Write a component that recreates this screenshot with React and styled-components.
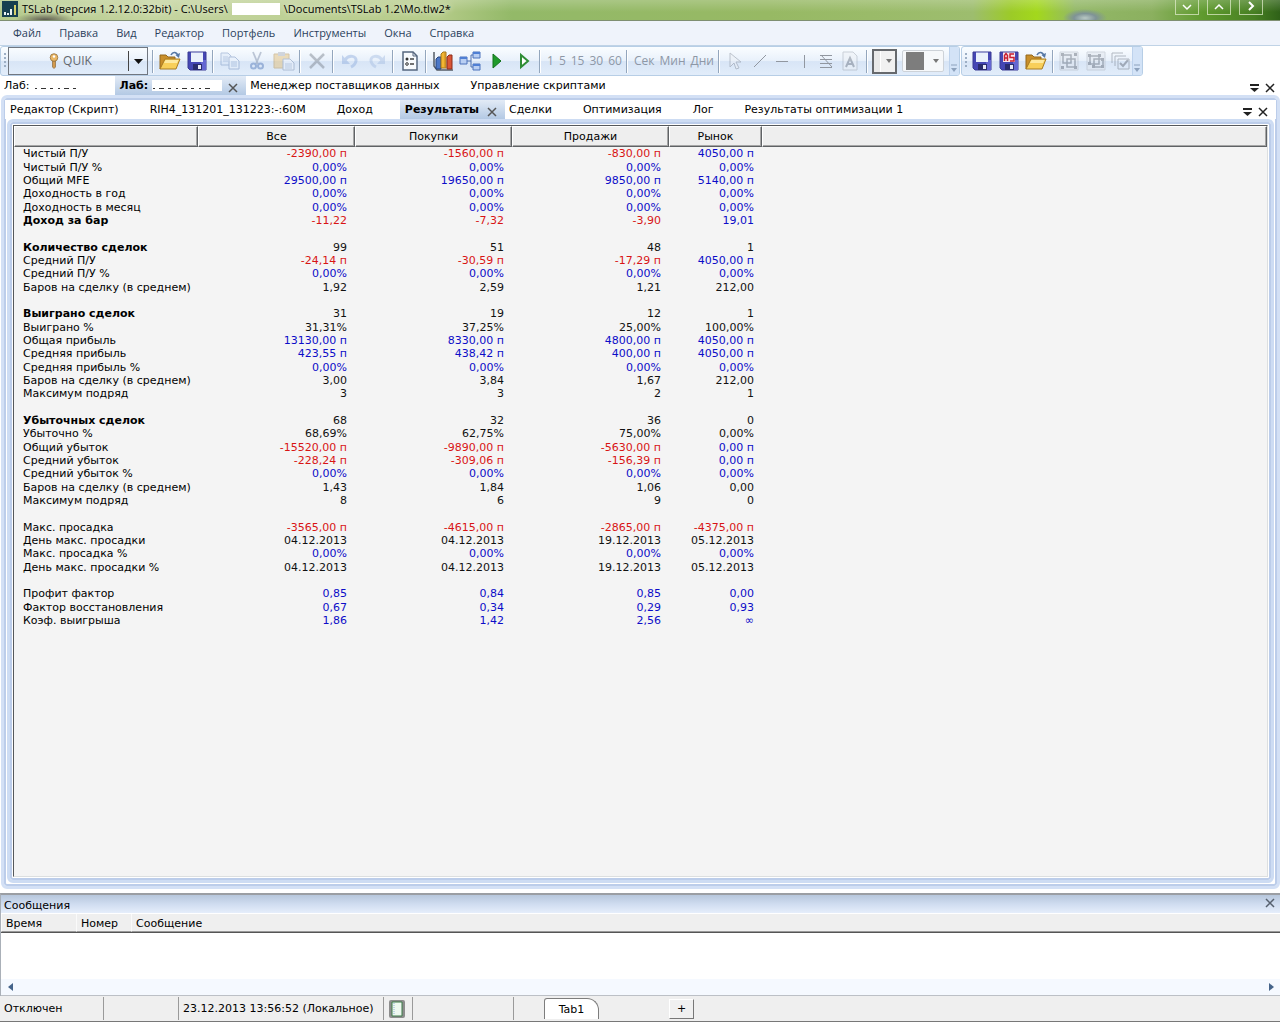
import React from 'react';
import styled, { createGlobalStyle, css } from 'styled-components';

const GlobalStyle = createGlobalStyle`
  * { box-sizing: border-box; }
  body {
    margin: 0;
    background: #fff;
    color: #000;
    font-family: "DejaVu Sans", "Liberation Sans", sans-serif;
    font-size: 11px;
    line-height: 13px;
  }
  button, select {
    font: inherit;
    color: inherit;
    margin: 0;
    padding: 0;
    border: 0;
    background: none;
  }
`;

const uiFont = css`
  font-family: "Open Sans", "Noto Sans", sans-serif;
  font-size: ${(p) => p.$size || 11}px;
  line-height: 16px;
`;

const Window = styled.div`
  display: flex;
  flex-direction: column;
  min-height: 100vh;
`;

/* ---------- title bar and menu ---------- */

const TitleBar = styled.header`
  ${uiFont}
  display: flex;
  justify-content: space-between;
  height: 21px;
  padding-left: 2px;
  border-bottom: 1px solid #7f8f72;
  background:
    radial-gradient(ellipse 22px 9px at 1085px 18px, #b8c8c4 0, #7f9396 50%, transparent 100%),
    radial-gradient(ellipse 30px 8px at 45px 20px, #5d5a50 0, transparent 100%),
    linear-gradient(to bottom, rgba(255, 255, 255, 0.2), transparent 60%),
    linear-gradient(to right, #b3c98a 0, #c5d5a0 12%, #b6cc8a 34%, #93b968 40%, #97b964 60%, #9dbd6e 76%,
      #9ccb27 79%, #a3d81c 81%, #93b867 84%, #8bb05f 90%, #5f9a2e 94%, #477f22 98%, #2f6118 100%);
`;

const TitleText = styled.h1`
  display: flex;
  align-items: center;
  margin: 0;
  padding-bottom: 2px;
  font-size: inherit;
  font-weight: 400;
  gap: 4px;
  text-shadow: 0 0 6px #fff;
`;

const HiddenName = styled.span`
  width: ${(p) => p.$width}px;
  height: 12px;
  background: #fff;
`;

const Caption = styled.div`
  display: flex;
  gap: 8px;
  padding-right: 17px;
`;

const CaptionButton = styled.button`
  display: flex;
  justify-content: center;
  width: 24px;
  height: 15px;
  border: 1px solid rgba(230, 240, 210, 0.7);
  border-top: 0;
`;

const MenuBar = styled.nav`
  ${uiFont}
  display: flex;
  align-items: center;
  gap: 18px;
  height: 25px;
  padding-left: 13px;
  border-bottom: 1px solid #c0d3e6;
  background: #eff3fb;
  color: #2b3f5c;
`;

/* ---------- toolbars ---------- */

const ToolbarRow = styled.div`
  ${uiFont}
  display: flex;
  gap: 1px;
  height: 30px;
`;

const Toolbar = styled.div`
  display: flex;
  align-items: center;
  padding-left: 3px;
  border: 1px solid #b7cee6;
  border-radius: 3px;
  overflow: hidden;
  color: #8d97a6;
  background: linear-gradient(to bottom, #fafdff 0, #e9f1fb 48%, #d8e5f6 52%, #e2edfa 100%);
`;

const Grip = styled.span`
  width: 4px;
  height: 16px;
  background: repeating-linear-gradient(to bottom, #9caec4 0 2px, transparent 2px 4px);
  background-size: 2px 100%;
  background-repeat: no-repeat;
`;

const Provider = styled.div`
  display: flex;
  align-items: center;
  width: 140px;
  height: 28px;
  margin-right: 2px;
  border: 1px solid #717780;
  color: #62666c;
`;

const ProviderName = styled.button`
  flex: 1;
  display: flex;
  align-items: center;
  justify-content: center;
  gap: 4px;
  height: 20px;
  padding-left: 4px;
  font-size: 12px;
  border-right: 1px solid #444;
`;

const ProviderArrow = styled.button`
  width: 18px;
  height: 20px;
  display: grid;
  place-items: center;
`;

const IconButton = styled.button`
  display: grid;
  place-items: center;
  flex: none;
  width: ${(p) => (p.$narrow ? 22 : 27)}px;
  height: 26px;
  opacity: ${(p) => (p.$dim ? 0.45 : 1)};
`;

const Divider = styled.span`
  flex: none;
  width: 2px;
  height: 23px;
  margin: 0 2px;
  border-left: 1px solid #93a6bd;
  border-right: 1px solid #fff;
`;

const TextButtons = styled.div`
  display: flex;
  gap: 5px;
  padding: 0 2px 0 4px;
  font-size: 12px;
`;

const StyleSelect = styled.select`
  width: 25px;
  height: 25px;
  margin-left: 2px;
  appearance: none;
  border: 2px solid #66696d;
  color: transparent;
  background:
    conic-gradient(from -45deg at 50% 100%, #888 0 90deg, transparent 90deg) 0 0 / 0 0 no-repeat,
    linear-gradient(to right, #e9e9e9 6px, #fff 6px 7px, #f1f1f1 7px);
`;

const SelectBox = styled.label`
  display: grid;
  align-items: center;
  justify-items: end;
  & > * { grid-area: 1 / 1; }
  & > svg { margin-right: 5px; pointer-events: none; }
`;

const ColorButton = styled.button`
  display: flex;
  align-items: center;
  gap: 9px;
  width: 42px;
  height: 22px;
  margin: 0 5px;
  padding-left: 3px;
  border: 1px solid #cdd2d8;
  border-radius: 2px;
  background: #f6f8fa;
`;

const Swatch = styled.span`
  width: 18px;
  height: 18px;
  background: #7d7d7d;
`;

const Overflow = styled.button`
  display: grid;
  place-items: end center;
  width: 10px;
  height: 28px;
  padding-bottom: 3px;
  border-left: 1px solid #bdd2ec;
  background: #d3e3f7;
`;

/* ---------- tabs and frames ---------- */

const TabStrip = styled.div`
  display: flex;
  align-items: stretch;
  height: 19px;
  padding: 0 ${(p) => (p.$inner ? 3 : 0)}px 0 ${(p) => (p.$inner ? 1 : 0)}px;
  background: #fff;
`;

const Tab = styled.div`
  display: flex;
  align-items: center;
  padding-left: 4px;
  padding-right: ${(p) => (p.$active ? 8 : 27)}px;
  font-weight: ${(p) => (p.$active ? 700 : 400)};
  ${(p) => p.$active && css`
    padding-left: 5px;
    background: linear-gradient(to bottom, #e3ebf6, #b3c9e4);
  `}
`;

const TabLabel = styled.button`
  display: flex;
  align-items: center;
  gap: 4px;
  white-space: nowrap;
`;

const CloseButton = styled.button`
  display: grid;
  place-items: center;
  width: 10px;
  height: 15px;
  margin-left: ${(p) => p.$space || 0}px;
  align-self: end;
`;

const StripActions = styled.div`
  display: flex;
  align-items: center;
  gap: 6px;
  margin-left: auto;
  padding-right: 5px;
`;

const OuterFrame = styled.main`
  flex: 1;
  display: flex;
  flex-direction: column;
  margin: 0 0 4px 1px;
  padding: 2px 1px 1px;
  border: 3px solid #d3e0f5;
  border-radius: 6px;
  box-shadow: inset 0 0 0 2px #bccdea;
`;

const InnerFrame = styled.section`
  flex: 1;
  display: flex;
  flex-direction: column;
  margin: 0 2px 2px;
  padding: 3px;
  border: 3px solid #cddcf3;
  border-radius: 6px;
  box-shadow: inset 0 0 0 2px #bccdea;
`;

const Report = styled.div`
  flex: 1;
  border: 1px solid #dcdfe0;
  border-top-color: #55585b;
  border-left-color: #55585b;
  background: #f4f4f4;
`;

/* ---------- results table ---------- */

const ResultsTable = styled.table`
  width: 100%;
  table-layout: fixed;
  border-collapse: separate;
  border-spacing: 0;
`;

const Col = styled.col`
  width: ${(p) => (p.$width ? `${p.$width}px` : 'auto')};
`;

const HeadCell = styled.th`
  height: 21px;
  padding: 0;
  font-weight: 400;
  border: 1px solid #fff;
  border-right-color: #5f6265;
  border-bottom-color: #5f6265;
  box-shadow: inset -1px -1px 0 #a6a6a6;
  background: #eee;
`;

const Row = styled.tr`
  height: 13px;
  line-height: 13px;
  &:nth-child(3n + 2) { height: 14px; }
`;

const NameCell = styled.th`
  padding: 0 0 0 9px;
  text-align: left;
  white-space: nowrap;
  font-weight: ${(p) => (p.$bold ? 700 : 400)};
`;

const tones = { r: '#d81414', b: '#0c0cc8', k: '#111' };

const ValueCell = styled.td`
  padding: 0 8px 0 0;
  text-align: right;
  white-space: nowrap;
  color: ${(p) => tones[p.$tone]};
`;

/* ---------- messages ---------- */

const Messages = styled.section`
  border-top: 2px solid #9b9ea3;
  border-left: 1px solid #aab0b8;
`;

const MessagesTitle = styled.div`
  display: flex;
  align-items: center;
  justify-content: space-between;
  height: 19px;
  padding: 2px 5px 0 3px;
  border-bottom: 1px solid #fff;
  background: linear-gradient(to bottom, #b7c7dc, #cfdcf0 50%, #e6eefb);
`;

const TitleClose = styled(CloseButton)`
  align-self: start;
  height: 12px;
`;

const PanelHeading = styled.h2`
  margin: 0;
  font-size: 11px;
  font-weight: 400;
`;

const MessagesTable = styled.table`
  width: 100%;
  table-layout: fixed;
  border-spacing: 0;
  border-bottom: 1px solid #555;
`;

const MessageHead = styled.th`
  height: 18px;
  padding: 2px 0 0 4px;
  text-align: left;
  font-weight: 400;
  border-left: 1px solid #fafafa;
  border-bottom: 1px solid #999;
  background: #efefef;
`;

const MessageSpace = styled.div`
  height: 46px;
`;

const ScrollTrack = styled.div`
  display: flex;
  align-items: center;
  justify-content: space-between;
  height: 17px;
  padding: 0 4px;
  border-bottom: 1px solid #bcc0c6;
  background: #f5f9ff;
`;

const ScrollButton = styled.button`
  display: grid;
  place-items: center;
  width: 10px;
  height: 14px;
`;

/* ---------- status bar ---------- */

const StatusBar = styled.footer`
  display: flex;
  align-items: center;
  height: 26px;
  border-bottom: 1px solid #777;
  background: #efefef;
`;

const StatusCell = styled.div`
  display: flex;
  align-items: center;
  width: ${(p) => p.$width}px;
  height: 23px;
  padding-left: 4px;
  border-right: 1px solid #9a9a9a;
  white-space: nowrap;
`;

const SheetTab = styled.button`
  width: 55px;
  height: 21px;
  margin-left: 30px;
  border: 1px solid #7d7d7d;
  border-bottom: 0;
  border-radius: 3px 12px 0 0;
  background: #fff;
`;

const AddButton = styled.button`
  width: 25px;
  height: 20px;
  margin-left: 70px;
  border: 1px solid #fff;
  border-right-color: #777;
  border-bottom-color: #777;
  background: #f0f0f0;
`;

/* ---------- drawings ---------- */

const Svg = ({ w = 20, h = 20, children }) => (
  <svg width={w} height={h} viewBox={`0 0 ${w} ${h}`} fill="none" aria-hidden="true">{children}</svg>
);

const Arrow = ({ color = '#555' }) => <Svg w={9} h={5}><path d="M0 0h9L4.500 5z" fill={color} /></Svg>;
const SmallArrow = ({ color = '#777' }) => <Svg w={6} h={4}><path d="M0 0h6L3 4z" fill={color} /></Svg>;
const Cross = ({ color = '#333' }) => (
  <Svg w={10} h={10}><path d="M1 1l8 8M9 1l-8 8" stroke={color} strokeWidth="1.500" /></Svg>
);
const ListArrow = () => (
  <Svg w={9} h={8}><path d="M0 1h9" stroke="#222" strokeWidth="2" /><path d="M0 4h9L4.500 8z" fill="#222" /></Svg>
);
const OverflowMark = () => (
  <Svg w={6} h={8}><path d="M0 1h6" stroke="#8da2bd" /><path d="M0 4h6L3 8z" fill="#8da2bd" /></Svg>
);

const Logo = () => (
  <Svg w={16} h={16}>
    <path d="M0 0h16v16H0z" fill="#173f50" />
    <path d="M2 11h2v3H2zM5 12h2v2H5z" fill="#e9f2f2" />
    <path d="M8 8h2v6H8z" fill="#e9f2f2" /><path d="M12 4h2v10h-2z" fill="#d5cf6a" />
  </Svg>
);

const KeyIcon = () => (
  <Svg w={10} h={16}>
    <path d="M3.500 8h3v6l-1.500 1.500L3.500 14z" fill="#d39a4d" stroke="#8a6a3e" strokeWidth=".7" />
    <circle cx="5" cy="4.500" r="3.800" fill="#eab765" stroke="#92703f" strokeWidth=".8" />
    <circle cx="5" cy="3.500" r="1.200" fill="#fff" />
  </Svg>
);

const FolderIcon = () => (
  <Svg w={22}>
    <path d="M1 18V4h6l2 2h7v3" fill="#c98f2a" stroke="#94691d" />
    <path d="M1 18L6 8h15l-4 10z" fill="#f8cf5a" stroke="#a77a22" />
    <path d="M6.500 9h13L18 12H5z" fill="#fde9a0" />
    <path d="M12 4c2-4 6-3 7 1" stroke="#5577a5" strokeWidth="1.600" /><path d="M16.500 4l3.500 3 1-5z" fill="#5577a5" />
  </Svg>
);

const DiskIcon = ({ letters }) => (
  <Svg>
    <path d="M1 1h18v18H3l-2-2z" fill="#4547b4" stroke="#3a3b94" />
    <path d="M14 9h5v10h-5z" fill="#6466d2" />
    <path d="M4 1.500h12V11H4z" fill={letters ? '#fbe7ea' : '#eaf1fb'} />
    <path d="M6 13h9v6H6z" fill="#2a2c6e" /><path d="M11 14h3v4h-3z" fill="#e8eaf6" />
    {letters && (
      <path d="M5.500 10V4.500l1.500-2 1.500 2V10M5.500 7h3M15 3h-4v3.500h4V10h-4" stroke="#c81f32" strokeWidth="1.500" />
    )}
  </Svg>
);

const CopyIcon = () => (
  <Svg>
    <path d="M1 2h7l3 3v9H1z" fill="#dbe7f8" stroke="#6f8dbd" /><path d="M3 6h5M3 8h5M3 10h5" stroke="#7f9bc7" />
    <path d="M9 6h6l4 4v8H9z" fill="#e8f0fb" stroke="#6684b6" /><path d="M11 11h6M11 13h6M11 15h6" stroke="#7f9bc7" />
  </Svg>
);
const CutIcon = () => (
  <Svg>
    <path d="M6 1l5 12M14 1L9 13" stroke="#7b8ba6" strokeWidth="1.800" />
    <circle cx="6.500" cy="15" r="2.500" stroke="#4c73b5" strokeWidth="2" /><circle cx="13.500" cy="15" r="2.500" stroke="#4c73b5" strokeWidth="2" />
  </Svg>
);
const PasteIcon = () => (
  <Svg w={22}>
    <path d="M1 3h15v14H1z" fill="#e6bd6d" stroke="#b18a43" /><path d="M5 1h7v4H5z" fill="#a8adb7" />
    <path d="M10 8h7l4 4v7H10z" fill="#eef3fb" stroke="#7288ab" /><path d="M12 13h7M12 15h7M12 17h7" stroke="#8ea5c7" />
  </Svg>
);
const DeleteIcon = () => <Svg><path d="M3 3l14 14M17 3L3 17" stroke="#777f8a" strokeWidth="2.500" /></Svg>;
const UndoIcon = () => (
  <Svg><path d="M5 9c4-6 12-4 11 1-.500 3-3 5-5 6" stroke="#8fadde" strokeWidth="3" /><path d="M2 4v9h8z" fill="#8fadde" /></Svg>
);
const RedoIcon = () => (
  <Svg><path d="M15 9C11 3 3 5 4 10c.500 3 3 5 5 6" stroke="#a5bde2" strokeWidth="3" /><path d="M18 4v9h-8z" fill="#a5bde2" /></Svg>
);
const PropsIcon = () => (
  <Svg>
    <path d="M3 1h10l4 4v14H3z" fill="#f7fafd" stroke="#56677f" strokeWidth="1.500" /><path d="M13 1v4h4" stroke="#56677f" />
    <circle cx="7" cy="8" r="1.500" fill="#333" /><circle cx="7" cy="13" r="1.300" stroke="#333" />
    <path d="M10 8h4M10 13h4" stroke="#444" strokeWidth="1.500" />
  </Svg>
);
const ChartIcon = () => (
  <Svg w={22}>
    <path d="M2 1v14l3 4h16" stroke="#555c66" strokeWidth="1.500" />
    <path d="M4 8l2-2h3v12H4z" fill="#4c78c8" stroke="#29477f" />
    <path d="M9 3l2-2h3v16H9z" fill="#f2b632" stroke="#a3741a" /><path d="M13 2v15" stroke="#c98a1e" />
    <path d="M15 6l2-2h3v14h-5z" fill="#d95536" stroke="#8d2c18" />
  </Svg>
);
const BlocksIcon = () => (
  <Svg w={22}>
    <path d="M8 10h4M12 4v12M12 4h3M12 16h3" stroke="#4d6fae" />
    <path d="M1 6h7v7H1zM14 1h7v6h-7zM14 13h7v6h-7z" fill="#b9cff3" stroke="#4d73bb" />
    <path d="M1 6h7v2H1zM14 1h7v2h-7zM14 13h7v2h-7z" fill="#4f7fd4" />
  </Svg>
);
const PlayIcon = ({ hollow }) => (
  <Svg>
    <path
      d={hollow ? 'M7 4l7 6-7 6z' : 'M6 3l8 7-8 7z'}
      fill={hollow ? '#fff' : '#1f9a2b'}
      stroke={hollow ? '#2f8d36' : '#12731c'}
      strokeWidth={hollow ? 2 : 1}
    />
  </Svg>
);
const PointerIcon = () => <Svg><path d="M5 2v14l4-4 2 6 3-1-3-6h5z" fill="#eef1f5" stroke="#7f8794" /></Svg>;
const LineIcon = ({ d }) => <Svg><path d={d} stroke="#9197a0" /></Svg>;
const TextIcon = () => (
  <Svg><path d="M3 1h10l4 4v14H3z" fill="#eef1f5" stroke="#9aa2ad" /><path d="M6 16l4-9 4 9M8 13h4" stroke="#69717d" strokeWidth="2" /></Svg>
);
const GroupIcon = ({ open }) => (
  <Svg>
    <path d="M1 1h18v18H1z" fill="#dfe4ec" stroke="#aab1bc" />
    <path d={open ? 'M4 5h9v8H4zM8 8h9v8H8z' : 'M4 4h8v8H4zM8 8h8v8H8z'} stroke="#59616e" strokeWidth="1.500" />
    <path
      d={open ? 'M2 3h3v3H2zM12 3h3v3h-3zM6 14h3v3H6zM15 14h3v3h-3zM15 7h3v3h-3zM2 11h3v3H2z' : 'M2 2h3v3H2zM15 2h3v3h-3zM2 15h3v3H2zM15 15h3v3h-3z'}
      fill="#59616e"
    />
  </Svg>
);
const ChecksIcon = () => (
  <Svg><path d="M1 12V2h11M4 15V5h11M7 8h11v10H7z" stroke="#69717d" /><path d="M9 12l3 3 5-6" stroke="#59616e" strokeWidth="2" /></Svg>
);
const BookIcon = () => (
  <Svg w={18}>
    <path d="M1 3a2 2 0 012-2h12a2 2 0 012 2v14a2 2 0 01-2 2H3a2 2 0 01-2-2z" fill="#8d8d8d" />
    <path d="M4 3h10v14H4z" fill="#eef8f0" stroke="#3d7a49" /><path d="M6 4v12" stroke="#8fb4d8" strokeDasharray="1 1" />
  </Svg>
);
const MaskedName = ({ width }) => (
  <svg width={width} height="11" aria-hidden="true">
    <rect width={width} height="11" fill="#fff" />
    <path d={`M1 8.500h${width - 10}`} stroke="#333" strokeDasharray="2 4 5 4 3 5" />
  </svg>
);

/* ---------- data ---------- */

const menu = ['Файл', 'Правка', 'Вид', 'Редактор', 'Портфель', 'Инструменты', 'Окна', 'Справка'];

const zero = 'b0,00%';
const zeros = [zero, zero, zero, zero];

// The first letter of each value is its tone: r - loss, b - profit, k - neutral.
const rows = [
  ['Чистый П/У', 'r-2390,00 п', 'r-1560,00 п', 'r-830,00 п', 'b4050,00 п'],
  ['Чистый П/У %', ...zeros],
  ['Общий MFE', 'b29500,00 п', 'b19650,00 п', 'b9850,00 п', 'b5140,00 п'],
  ['Доходность в год', ...zeros],
  ['Доходность в месяц', ...zeros],
  ['*Доход за бар', 'r-11,22', 'r-7,32', 'r-3,90', 'b19,01'],
  null,
  ['*Количество сделок', 'k99', 'k51', 'k48', 'k1'],
  ['Средний П/У', 'r-24,14 п', 'r-30,59 п', 'r-17,29 п', 'b4050,00 п'],
  ['Средний П/У %', ...zeros],
  ['Баров на сделку (в среднем)', 'k1,92', 'k2,59', 'k1,21', 'k212,00'],
  null,
  ['*Выиграно сделок', 'k31', 'k19', 'k12', 'k1'],
  ['Выиграно %', 'k31,31%', 'k37,25%', 'k25,00%', 'k100,00%'],
  ['Общая прибыль', 'b13130,00 п', 'b8330,00 п', 'b4800,00 п', 'b4050,00 п'],
  ['Средняя прибыль', 'b423,55 п', 'b438,42 п', 'b400,00 п', 'b4050,00 п'],
  ['Средняя прибыль %', ...zeros],
  ['Баров на сделку (в среднем)', 'k3,00', 'k3,84', 'k1,67', 'k212,00'],
  ['Максимум подряд', 'k3', 'k3', 'k2', 'k1'],
  null,
  ['*Убыточных сделок', 'k68', 'k32', 'k36', 'k0'],
  ['Убыточно %', 'k68,69%', 'k62,75%', 'k75,00%', 'k0,00%'],
  ['Общий убыток', 'r-15520,00 п', 'r-9890,00 п', 'r-5630,00 п', 'b0,00 п'],
  ['Средний убыток', 'r-228,24 п', 'r-309,06 п', 'r-156,39 п', 'b0,00 п'],
  ['Средний убыток %', ...zeros],
  ['Баров на сделку (в среднем)', 'k1,43', 'k1,84', 'k1,06', 'k0,00'],
  ['Максимум подряд', 'k8', 'k6', 'k9', 'k0'],
  null,
  ['Макс. просадка', 'r-3565,00 п', 'r-4615,00 п', 'r-2865,00 п', 'r-4375,00 п'],
  ['День макс. просадки', 'k04.12.2013', 'k04.12.2013', 'k19.12.2013', 'k05.12.2013'],
  ['Макс. просадка %', ...zeros],
  ['День макс. просадки %', 'k04.12.2013', 'k04.12.2013', 'k19.12.2013', 'k05.12.2013'],
  null,
  ['Профит фактор', 'b0,85', 'b0,84', 'b0,85', 'b0,00'],
  ['Фактор восстановления', 'b0,67', 'b0,34', 'b0,29', 'b0,93'],
  ['Коэф. выигрыша', 'b1,86', 'b1,42', 'b2,56', 'b∞'],
];

const innerTabs = ['Редактор (Скрипт)', 'RIH4_131201_131223:-:60M', 'Доход', '*Результаты', 'Сделки', 'Оптимизация', 'Лог', 'Результаты оптимизации 1'];

const Tool = ({ label, children, ...rest }) => (
  <IconButton type="button" aria-label={label} {...rest}>{children}</IconButton>
);

const Actions = () => (
  <StripActions>
    <CloseButton aria-label="Список вкладок"><ListArrow /></CloseButton>
    <CloseButton aria-label="Закрыть"><Cross color="#222" /></CloseButton>
  </StripActions>
);

export default function App() {
  return (
    <Window>
      <GlobalStyle />
      <TitleBar>
        <TitleText>
          <Logo />
          <span>TSLab (версия 1.2.12.0:32bit) - C:\Users\</span>
          <HiddenName $width={48} />
          <span>\Documents\TSLab 1.2\Mo.tlw2*</span>
        </TitleText>
        <Caption>
          <CaptionButton aria-label="Свернуть"><Svg w={10} h={12}><path d="M1 5l4 4 4-4" stroke="#fff" strokeWidth="1.500" /></Svg></CaptionButton>
          <CaptionButton aria-label="Развернуть"><Svg w={10} h={12}><path d="M1 9l4-4 4 4" stroke="#fff" strokeWidth="1.500" /></Svg></CaptionButton>
          <CaptionButton aria-label="Закрыть окно"><Svg w={10} h={12}><path d="M3 2l4 4-4 4" stroke="#fff" strokeWidth="2" /></Svg></CaptionButton>
        </Caption>
      </TitleBar>

      <MenuBar>{menu.map((m) => <button type="button" key={m}>{m}</button>)}</MenuBar>

      <ToolbarRow>
        <Toolbar>
          <Grip />
          <Provider>
            <ProviderName><KeyIcon />QUIK</ProviderName>
            <ProviderArrow aria-label="Выбрать поставщика"><Arrow color="#111" /></ProviderArrow>
          </Provider>
          <Divider />
          <Tool label="Открыть"><FolderIcon /></Tool>
          <Tool label="Сохранить"><DiskIcon /></Tool>
          <Divider />
          <Tool label="Копировать" $dim><CopyIcon /></Tool>
          <Tool label="Вырезать" $dim><CutIcon /></Tool>
          <Tool label="Вставить" $dim><PasteIcon /></Tool>
          <Divider />
          <Tool label="Удалить" $dim><DeleteIcon /></Tool>
          <Divider />
          <Tool label="Отменить" $dim><UndoIcon /></Tool>
          <Tool label="Повторить" $dim><RedoIcon /></Tool>
          <Divider />
          <Tool label="Свойства"><PropsIcon /></Tool>
          <Divider />
          <Tool label="График"><ChartIcon /></Tool>
          <Tool label="Схема"><BlocksIcon /></Tool>
          <Tool label="Запустить"><PlayIcon /></Tool>
          <Tool label="Выполнить шаг"><PlayIcon hollow /></Tool>
          <Divider />
          <TextButtons>{['1', '5', '15', '30', '60'].map((t) => <button type="button" key={t}>{t}</button>)}</TextButtons>
          <Divider />
          <TextButtons>{['Сек', 'Мин', 'Дни'].map((t) => <button type="button" key={t}>{t}</button>)}</TextButtons>
          <Divider />
          <Tool label="Указатель" $dim><PointerIcon /></Tool>
          <Tool label="Наклонная линия" $narrow><LineIcon d="M4 16L16 4" /></Tool>
          <Tool label="Горизонтальная линия" $narrow><LineIcon d="M4 10.500h12" /></Tool>
          <Tool label="Вертикальная линия" $narrow><LineIcon d="M10.500 4v13" /></Tool>
          <Tool label="Уровни Фибоначчи" $narrow><LineIcon d="M4 4.500h12M4 8.500h12M4 12.500h12M4 16.500h12M5 4l11 12" /></Tool>
          <Tool label="Текст" $dim><TextIcon /></Tool>
          <Divider />
          <SelectBox>
            <StyleSelect aria-label="Толщина линии" defaultValue="1"><option value="1"> </option></StyleSelect>
            <SmallArrow />
          </SelectBox>
          <ColorButton aria-label="Цвет линии"><Swatch /><SmallArrow /></ColorButton>
          <Overflow aria-label="Ещё кнопки"><OverflowMark /></Overflow>
        </Toolbar>
        <Toolbar>
          <Grip />
          <Tool label="Сохранить скрипт"><DiskIcon /></Tool>
          <Tool label="Сохранить как"><DiskIcon letters /></Tool>
          <Tool label="Открыть скрипт"><FolderIcon /></Tool>
          <Divider />
          <Tool label="Сгруппировать" $dim><GroupIcon /></Tool>
          <Tool label="Разгруппировать" $dim><GroupIcon open /></Tool>
          <Tool label="Выбрать все" $narrow $dim><ChecksIcon /></Tool>
          <Overflow aria-label="Ещё кнопки скрипта"><OverflowMark /></Overflow>
        </Toolbar>
      </ToolbarRow>

      <TabStrip>
        <Tab><TabLabel>Лаб:<MaskedName width={54} /></TabLabel></Tab>
        <Tab $active>
          <TabLabel>Лаб:<MaskedName width={70} /></TabLabel>
          <CloseButton aria-label="Закрыть вкладку" $space={6}><Cross color="#555" /></CloseButton>
        </Tab>
        <Tab><TabLabel>Менеджер поставщиков данных</TabLabel></Tab>
        <Tab><TabLabel>Управление скриптами</TabLabel></Tab>
        <Actions />
      </TabStrip>

      <OuterFrame>
        <TabStrip $inner>
          {innerTabs.map((t) => {
            const active = t[0] === '*';
            return (
              <Tab key={t} $active={active}>
                <TabLabel>{active ? t.slice(1) : t}</TabLabel>
                {active && <CloseButton aria-label="Закрыть результаты" $space={8}><Cross color="#555" /></CloseButton>}
              </Tab>
            );
          })}
          <Actions />
        </TabStrip>
        <InnerFrame>
          <Report>
            <ResultsTable>
              <colgroup>
                <Col $width={184} /><Col $width={157} /><Col $width={157} /><Col $width={157} /><Col $width={93} /><Col />
              </colgroup>
              <thead>
                <tr>{['', 'Все', 'Покупки', 'Продажи', 'Рынок', ' '].map((h) => <HeadCell key={h} scope="col">{h}</HeadCell>)}</tr>
              </thead>
              <tbody>
                {rows.map((row, i) => (
                  <Row key={i}>
                    {row && <NameCell scope="row" $bold={row[0][0] === '*'}>{row[0].replace('*', '')}</NameCell>}
                    {row && row.slice(1).map((v, j) => <ValueCell key={j} $tone={v[0]}>{v.slice(1)}</ValueCell>)}
                  </Row>
                ))}
              </tbody>
            </ResultsTable>
          </Report>
        </InnerFrame>
      </OuterFrame>

      <Messages>
        <MessagesTitle>
          <PanelHeading>Сообщения</PanelHeading>
          <TitleClose aria-label="Закрыть сообщения"><Cross color="#56606e" /></TitleClose>
        </MessagesTitle>
        <MessagesTable>
          <colgroup><Col $width={75} /><Col $width={55} /><Col /></colgroup>
          <thead><tr>{['Время', 'Номер', 'Сообщение'].map((h) => <MessageHead key={h} scope="col">{h}</MessageHead>)}</tr></thead>
        </MessagesTable>
        <MessageSpace />
        <ScrollTrack>
          <ScrollButton aria-label="Прокрутить влево"><Svg w={5} h={8}><path d="M5 0v8L0 4z" fill="#45648a" /></Svg></ScrollButton>
          <ScrollButton aria-label="Прокрутить вправо"><Svg w={5} h={8}><path d="M0 0v8l5-4z" fill="#45648a" /></Svg></ScrollButton>
        </ScrollTrack>
      </Messages>

      <StatusBar>
        <StatusCell $width={104}>Отключен</StatusCell>
        <StatusCell $width={75} />
        <StatusCell $width={205}>23.12.2013 13:56:52 (Локальное)</StatusCell>
        <StatusCell $width={29}><BookIcon /></StatusCell>
        <StatusCell $width={101} />
        <SheetTab>Tab1</SheetTab>
        <AddButton aria-label="Добавить вкладку">+</AddButton>
      </StatusBar>
    </Window>
  );
}
